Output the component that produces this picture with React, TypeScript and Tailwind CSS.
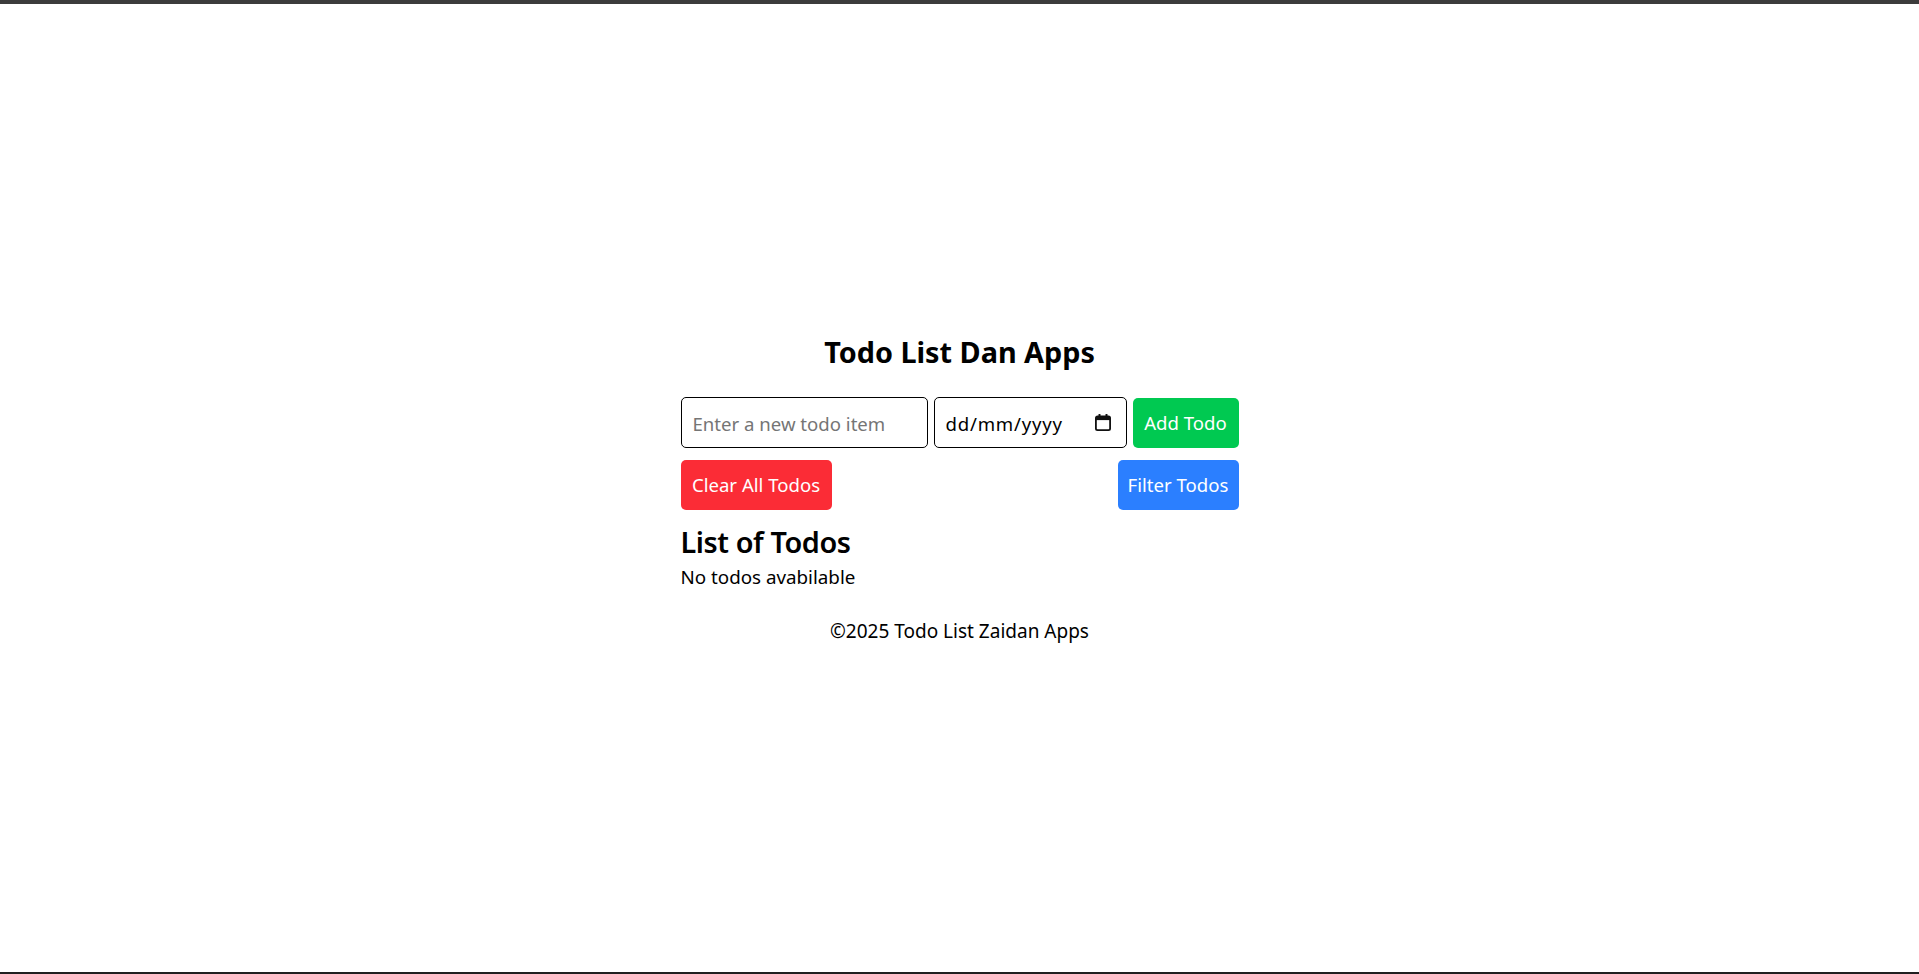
import React from 'react';

const CalendarIcon = () => (
  <svg width="16" height="17" viewBox="0 0 16 17" fill="none">
    <rect x="3.5" y="0" width="2" height="3.5" rx="0.5" fill="#111" />
    <rect x="10.5" y="0" width="2" height="3.5" rx="0.5" fill="#111" />
    <rect x="0.9" y="2.4" width="14.2" height="13.7" rx="1.6" stroke="#111" strokeWidth="1.8" />
    <rect x="1" y="2.5" width="14" height="3.6" fill="#111" />
  </svg>
);

const App = () => {
  return (
    <div className="h-screen flex flex-col bg-white font-['Noto_Sans',sans-serif] text-black">
      <div className="h-[4px] bg-[#3c3c3c]" />

      <main className="flex-1 flex flex-col items-center pt-[330px]">
        <div className="w-[558px] flex flex-col">
          <h1 className="text-[28.8px] leading-[36px] font-bold text-center">
            Todo List Dan Apps
          </h1>

          <div className="mt-[27px] flex items-center gap-[6px]">
            <input
              type="text"
              placeholder="Enter a new todo item"
              className="w-[247px] h-[51px] border border-black rounded-[5px] px-[11px] pt-[2px] text-[18.6px] placeholder:text-[#757575] outline-none"
            />
            <div className="w-[193px] h-[51px] border border-black rounded-[5px] pl-[11px] pr-[15px] flex items-center">
              <input
                type="text"
                placeholder="dd/mm/yyyy"
                className="flex-1 min-w-0 pt-[2px] text-[18.6px] tracking-[0.8px] placeholder:text-black outline-none"
              />
              <CalendarIcon />
            </div>
            <button className="w-[106px] h-[50px] rounded-[5px] bg-green-500 text-white text-[18.6px]">
              Add Todo
            </button>
          </div>

          <div className="mt-[12px] flex justify-between">
            <button className="w-[151px] h-[50px] rounded-[5px] bg-red-500 text-white text-[18.6px]">
              Clear All Todos
            </button>
            <button className="w-[121px] h-[50px] rounded-[5px] bg-blue-500 text-white text-[18.6px]">
              Filter Todos
            </button>
          </div>

          <h2 className="mt-[14px] text-[28.8px] leading-[36px] font-semibold tracking-[-0.4px]">
            List of Todos
          </h2>
          <p className="mt-[3px] text-[18.8px] leading-[28px]">No todos avabilable</p>

          <footer className="mt-[26px] text-[19px] leading-[28px] text-center">
            ©2025 Todo List Zaidan Apps
          </footer>
        </div>
      </main>

      <div className="h-[2px] bg-[#202020]" />
    </div>
  );
};

export default App;
